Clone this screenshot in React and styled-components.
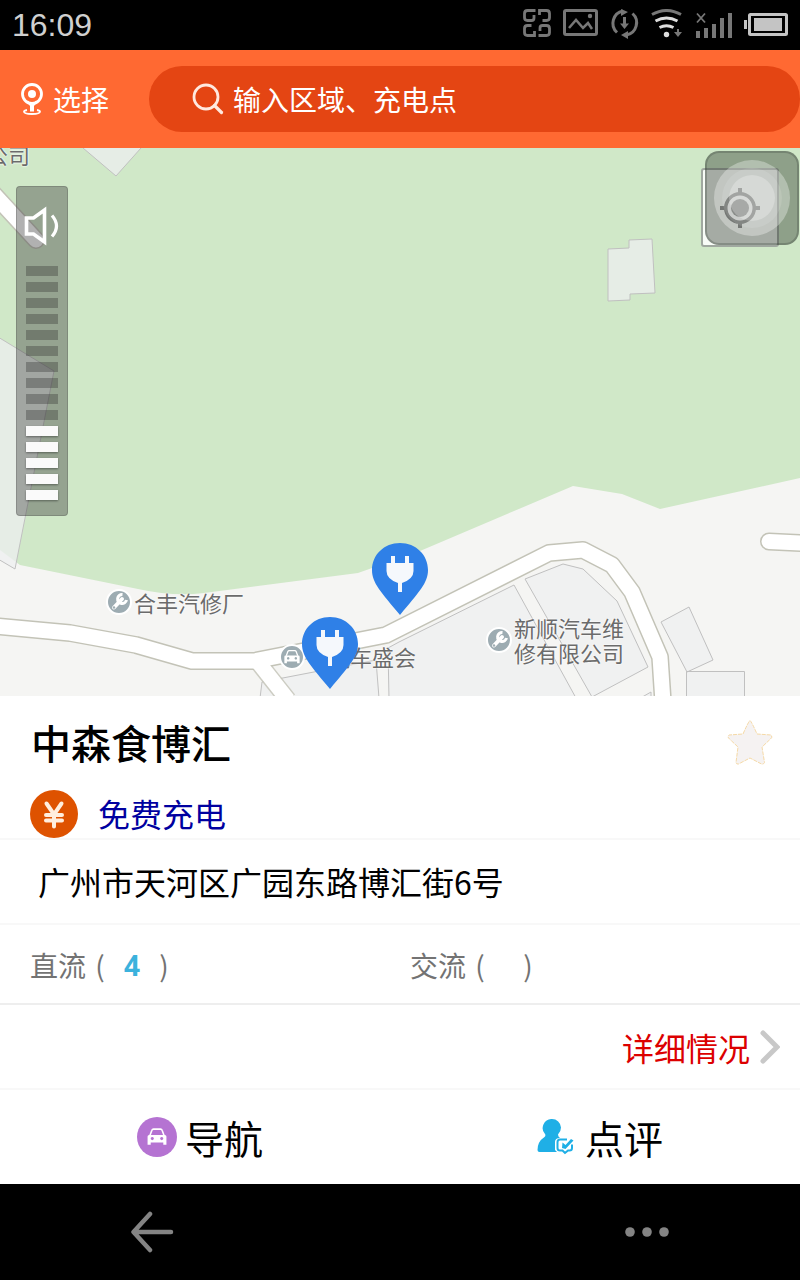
import React from "react";
import styled, { createGlobalStyle } from "styled-components";

const MAP_WIDTH = 800;
const MAP_HEIGHT = 548;

// Everything that sits on the map, in map units
const pins = [
  { id: "north", name: "充电点", x: 400, y: 467 },
  { id: "south", name: "中森食博汇", x: 330, y: 541 },
];

const places = [
  { id: "company", x: -14, y: 6, lines: ["公司"] },
  { id: "hefeng", x: 106, y: 454, icon: "wrench", lines: ["合丰汽修厂"] },
  { id: "carshow-icon", x: 279, y: 509, icon: "car", lines: [] },
  { id: "carshow", x: 328, y: 508, lines: ["汽车盛会"] },
  { id: "xinshun", x: 486, y: 492, icon: "wrench", lines: ["新顺汽车维", "修有限公司"] },
];

const VOLUME_STEPS = 15;
const volume = 5;

const place = (x, y) => ({
  left: `${(x / MAP_WIDTH) * 100}%`,
  top: `${(y / MAP_HEIGHT) * 100}%`,
});

const StatusIcons = () => (
  <svg width="268" height="32" viewBox="523 9 268 32" fill="none" aria-hidden="true">
    {/* four linked squares */}
    <g stroke="#777" strokeWidth="2.800">
      <path d="M535.500 10.500h-8q-3 0-3 3v4q0 3 3 3h4q2.500 0 2.500-2.500v-3" />
      <path d="M539.500 15v-4.500h7q3 0 3 3v4q0 3-3 3h-4" />
      <path d="M534.500 31v4.500h-7q-3 0-3-3v-4q0-3 3-3h4" />
      <path d="M538.500 35.500h8q3 0 3-3v-4q0-3-3-3h-4q-2.500 0-2.500 2.500v3" />
    </g>
    {/* picture */}
    <rect x="564.500" y="10.500" width="32" height="24" rx="1.500" stroke="#777" strokeWidth="3" />
    <path d="M569 28l7-8 7 8 5-5 4 6" stroke="#777" strokeWidth="2.500" />
    <circle cx="590" cy="16" r="2.200" fill="#777" />
    {/* sync */}
    <g stroke="#777" strokeWidth="3">
      <path d="M617 32.500a12.500 12.500 0 0 1 6-21.500M632.500 13.500a12.500 12.500 0 0 1-6 21.500" />
      <path d="M624.500 17v8" />
    </g>
    <path d="M621 9l7 3-7 4zM628 31l-7 4 7 4zM620 23.500h9l-4.500 5.500z" fill="#777" />
    {/* wifi */}
    <path d="M652 14.500q14.500-8 29 0" stroke="#777" strokeWidth="3" />
    <path d="M655.500 21q11-6 22 0M659.500 27.500q7-3.500 14 0" stroke="#ddd" strokeWidth="3" />
    <circle cx="666.500" cy="34.500" r="2.700" fill="#ddd" />
    <path d="M677 29h2v3h3l-4 5-4-5h3z" fill="#777" />
    {/* signal */}
    <path d="M697 13.500l8 9m0-9l-8 9" stroke="#777" strokeWidth="1.800" />
    <path d="M696 31h4v7h-4zM704 28h4v10h-4zM712 24h4v14h-4zM720 18h4v20h-4zM728 13h4v25h-4z" fill="#777" />
    {/* battery */}
    <rect x="749.500" y="14.500" width="37" height="20" rx="1" stroke="#c4c4c4" strokeWidth="3" />
    <path d="M754 18h28v13h-28zM744 20h3v9h-3z" fill="#c4c4c4" />
  </svg>
);

const LocationIcon = () => (
  <svg width="24" height="32" viewBox="0 0 24 32" fill="none" aria-hidden="true">
    <circle cx="12" cy="11" r="9.500" stroke="#fff" strokeWidth="2.800" />
    <circle cx="12" cy="11" r="4" fill="#fff" />
    <path d="M7.500 18.500l3.500 4v5h2v-5l3.500-4" stroke="#fff" strokeWidth="2" />
    <path d="M7 27q-3 .5-3 1.800 0 2.200 8 2.200t8-2.200q0-1.300-3-1.800" stroke="#fff" strokeWidth="1.800" />
  </svg>
);

const SearchIcon = () => (
  <svg width="32" height="32" viewBox="0 0 32 32" fill="none" stroke="#ffe9df" aria-hidden="true">
    <circle cx="14" cy="14" r="12" strokeWidth="2.800" />
    <path d="M22.500 22.500l7 7" strokeWidth="3.200" strokeLinecap="round" />
  </svg>
);

const SpeakerIcon = () => (
  <svg width="38" height="42" viewBox="0 0 38 42" fill="none" stroke="#fff" aria-hidden="true">
    <path d="M3.500 13h7L21.500 5v32L10.500 29h-7z" strokeWidth="3.600" />
    <path d="M29 10.500q9 10.500 0 21" strokeWidth="3.200" />
  </svg>
);

const CarShape = () => (
  <>
    <path
      d="M5 9L7.500 2.500Q8 1 9.500 1h9q1.500 0 2 1.500L23 9"
      fill="none"
      stroke="#fff"
      strokeWidth="2"
    />
    <path
      fillRule="evenodd"
      d="M4 8.500h20q2 0 2 2V21h-4v-3H6v3H2V10.500q0-2 2-2zM8 11a2 2 0 1 0 .01 0zM20 11a2 2 0 1 0 .01 0z"
      fill="#fff"
    />
  </>
);

const PoiIcon = ({ type }) => (
  <svg width="26" height="26" viewBox="0 0 26 26" aria-hidden="true">
    <circle cx="13" cy="13" r="12" fill="#9dacb2" stroke="#fff" strokeWidth="2" />
    {type === "wrench" ? (
      <>
        <path d="M8 18.500L16 10" stroke="#fff" strokeWidth="4" strokeLinecap="round" />
        <path
          d="M16.500 5.500a4.500 4.500 0 1 0 4 5.500"
          fill="none"
          stroke="#fff"
          strokeWidth="3"
        />
        <circle cx="8" cy="18.500" r="1.200" fill="#9dacb2" />
      </>
    ) : (
      <svg x="4" y="6" width="18" height="14" viewBox="0 0 28 22">
        <CarShape />
      </svg>
    )}
  </svg>
);

const PinIcon = () => (
  <svg width="56" height="72" viewBox="0 0 56 72" aria-hidden="true">
    <path d="M28 0C12 0 0 12 0 27c0 13 9 22 28 45 19-23 28-32 28-45C56 12 44 0 28 0z" fill="#2f80e7" />
    <path
      d="M19 13h4v7h10v-7h4v7h4.500v8q0 8-11.500 12v9h-4v-9q-11.500-4-11.500-12v-8H19z"
      fill="#f5f8fc"
    />
  </svg>
);

const TargetIcon = () => (
  <svg width="40" height="40" viewBox="0 0 40 40" fill="none" stroke="#333" aria-hidden="true">
    <path d="M20 0v6M20 34v6M0 20h6M34 20h6" strokeWidth="4" />
    <circle cx="20" cy="20" r="14" strokeWidth="4" />
    <circle cx="20" cy="20" r="11" stroke="#fff" strokeWidth="3" />
    <circle cx="20" cy="20" r="9" fill="#444" stroke="none" />
  </svg>
);

const MapDrawing = () => (
  <MapSvg viewBox="0 148 800 548" aria-hidden="true">
    <rect y="148" width="800" height="548" fill="#f5f5f3" />
    <path
      d="M0 148h800v330l-140 31-38-15-49-8-153 65-62 22-154 20q-30 4-66-4L20 565 0 550z"
      fill="#d0e8c8"
    />
    {/* building blocks */}
    <g fill="#eeeff0" fillOpacity="0.75" stroke="#c0c0c0">
      <path d="M83 148l33 28 25-28" />
      <path d="M-2 337l56 34-39 198-17-10z" />
      <path d="M608 249l21-1v-8l23-1 3 54-25 1v6l-22 1z" />
      <path d="M260 698l2-16 114-22 3 38M389 698l-1-50 11-6 115-57 62 113h-10M525 579l38-15 20 5 34 32 31 66-56 30z" />
      <path d="M661 622l28-15 24 53-26 12zM686.500 671.500h58v28h-58zM630 704l21-12v10" />
    </g>
    {/* roads: casing first, then the white surface */}
    <g fill="none" stroke="#c3c3b7" strokeWidth="18" strokeLinejoin="round">
      <path d="M258 662l30 38" strokeOpacity="0.8" />
      <path d="M-6 626l76 7 66 12 56 16h62l132-26 163-82 34-3 29 15 20 27 28 65 3 45" />
      <path d="M769 541.500l40 2" strokeLinecap="round" />
      <path d="M-10 190l46 50" strokeLinecap="round" />
    </g>
    <g fill="none" stroke="#fff" strokeWidth="15" strokeLinejoin="round">
      <path d="M258 662l30 38" />
      <path d="M-6 626l76 7 66 12 56 16h62l132-26 163-82 34-3 29 15 20 27 28 65 3 45" />
      <path d="M769 541.500l40 2" strokeLinecap="round" />
      <path d="M-10 190l46 50" strokeLinecap="round" />
    </g>
  </MapSvg>
);

const StarIcon = () => (
  <svg width="48" height="48" viewBox="0 0 48 48" aria-hidden="true">
    <path
      d="M24 1.500q1.500 1 7 13.500l14 1q2 2-.5 4L36 28l2.500 15.500q-1 2-3 1.500L24 39 12.500 45q-2 .5-2.500-1.500L12 28 3.500 20q-2.500-2-.5-4l14-1q5.500-12.500 7-13.500z"
      fill="#f5f2f2"
      stroke="#f5d9a6"
      strokeDasharray="4 1"
    />
  </svg>
);

const YuanIcon = () => (
  <svg width="48" height="48" viewBox="0 0 48 48" fill="none" aria-hidden="true">
    <circle cx="24" cy="24" r="24" fill="#de5200" />
    <path
      d="M16.500 13.500l7.500 11 7.500-11M24 24v12.500M16 25h16M16 30.500h16"
      stroke="#ffeede"
      strokeWidth="4"
      strokeLinecap="round"
    />
  </svg>
);

const ChevronIcon = () => (
  <svg width="20" height="34" viewBox="0 0 20 34" fill="none" aria-hidden="true">
    <path d="M3 3l14 14L3 31" stroke="#c8c8c8" strokeWidth="5" strokeLinecap="round" />
  </svg>
);

const NavigateIcon = () => (
  <svg width="40" height="40" viewBox="0 0 40 40" aria-hidden="true">
    <circle cx="20" cy="20" r="20" fill="#b573d2" />
    <svg x="9" y="11" width="22" height="18" viewBox="0 0 28 22">
      <CarShape />
    </svg>
  </svg>
);

const ReviewIcon = () => (
  <svg width="40" height="36" viewBox="0 0 40 36" fill="none" aria-hidden="true">
    <path
      d="M15 0a9 9 0 0 0-7 15Q9 16.500 7.500 18 .5 22.500.5 31q0 2 2 2H20l-2-2v-8q0-4 5-4-2-1.500-2-3.500 3-3 3-7A9 9 0 0 0 15 0z"
      fill="#1fafe6"
    />
    <path
      d="M30 20.500h-7q-2.500 0-2.500 2.500v6q0 2.500 2.500 2.500h2.500L28 34l3-2.500h1.500Q35 31.500 35 29v-3.500"
      stroke="#1fafe6"
      strokeWidth="2"
    />
    <path d="M25.500 23.500l3 2.500 5.500-6 2.500 1.500-8 8.500-3.500-1z" fill="#1fafe6" />
  </svg>
);

const App = () => {
  return (
    <Screen>
      <GlobalStyle />

      <StatusBar>
        <span>16:09</span>
        <StatusIcons />
      </StatusBar>

      <Header>
        <RegionButton type="button">
          <LocationIcon />
          选择
        </RegionButton>
        <SearchBox>
          <SearchIcon />
          <SearchInput type="text" aria-label="搜索" placeholder="输入区域、充电点" />
        </SearchBox>
      </Header>

      <MapArea>
        <MapDrawing />
        {places.map((item) => (
          <PlaceLabel key={item.id} style={place(item.x, item.y)}>
            {item.icon && <PoiIcon type={item.icon} />}
            <span>
              {item.lines.map((line) => (
                <PlaceLine key={line}>{line}</PlaceLine>
              ))}
            </span>
          </PlaceLabel>
        ))}
        {pins.map((pin) => (
          <Pin key={pin.id} type="button" aria-label={pin.name} style={place(pin.x, pin.y)}>
            <PinIcon />
          </Pin>
        ))}
        <LocateButton type="button" aria-label="定位">
          <TargetIcon />
        </LocateButton>
        <TouchBall>
          <BallRing>
            <BallCore />
          </BallRing>
        </TouchBall>
        <VolumePanel>
          <SpeakerIcon />
          <VolumeBars>
            {Array.from({ length: VOLUME_STEPS }, (_, i) => (
              <VolumeBar key={i} $on={i >= VOLUME_STEPS - volume} />
            ))}
          </VolumeBars>
        </VolumePanel>
      </MapArea>

      {/* STATION DETAILS */}
      <Summary>
        <TitleRow>
          <Title>中森食博汇</Title>
          <IconButton type="button" aria-label="收藏">
            <StarIcon />
          </IconButton>
        </TitleRow>
        <Fee>
          <YuanIcon />
          <FeeText>免费充电</FeeText>
        </Fee>
      </Summary>
      <Address>广州市天河区广园东路博汇街6号</Address>
      <Counts>
        <Count>
          直流<Paren>(</Paren>
          <Amount>4</Amount>
          <Paren>)</Paren>
        </Count>
        <Count>
          交流<Paren>(</Paren>
          <Amount />
          <Paren>)</Paren>
        </Count>
      </Counts>
      <DetailRow>
        <DetailLink href="#detail">
          详细情况
          <ChevronIcon />
        </DetailLink>
      </DetailRow>
      <Actions>
        <Action type="button">
          <NavigateIcon />
          导航
        </Action>
        <Action type="button">
          <ReviewIcon />
          点评
        </Action>
      </Actions>

      <SystemBar>
        <IconButton type="button" aria-label="返回">
          <svg width="44" height="44" viewBox="0 0 44 44" fill="none" aria-hidden="true">
            <path
              d="M19 4L2.500 22 19 40M4 22h36"
              stroke="#848484"
              strokeWidth="4.500"
              strokeLinecap="round"
              strokeLinejoin="round"
            />
          </svg>
        </IconButton>
        <IconButton type="button" aria-label="更多">
          <svg width="44" height="12" viewBox="0 0 44 12" fill="#848484" aria-hidden="true">
            <circle cx="5" cy="6" r="4.800" />
            <circle cx="22" cy="6" r="4.800" />
            <circle cx="39" cy="6" r="4.800" />
          </svg>
        </IconButton>
      </SystemBar>
    </Screen>
  );
};

// STYLED COMPONENTS
const GlobalStyle = createGlobalStyle`
  * {
    box-sizing: border-box;
  }
  body {
    margin: 0;
    background: #000;
    font-family: "Noto Sans CJK SC", sans-serif;
  }
  button, input {
    margin: 0;
    padding: 0;
    border: none;
    background: none;
    font: inherit;
    color: inherit;
  }
  svg {
    display: block;
    flex-shrink: 0;
  }
`;

const Screen = styled.div`
  display: flex;
  flex-direction: column;
  min-height: 100vh;
  background: #fff;
`;

const StatusBar = styled.div`
  display: flex;
  align-items: center;
  justify-content: space-between;
  height: 50px;
  padding: 0 9px 0 12px;
  background: #000;
  color: #d0d0d0;
  font-family: "Liberation Sans", sans-serif;
  font-size: 32px;
`;

const Header = styled.header`
  display: flex;
  align-items: center;
  gap: 40px;
  height: 98px;
  padding-left: 20px;
  background: #ff6932;
  color: #fff;
  font-size: 28px;
`;

const RegionButton = styled.button`
  display: flex;
  align-items: center;
  gap: 9px;
`;

const SearchBox = styled.label`
  flex: 1;
  display: flex;
  align-items: center;
  gap: 9px;
  height: 66px;
  padding: 0 43px;
  border-radius: 33px;
  background: #e44513;
`;

const SearchInput = styled.input`
  flex: 1;
  min-width: 0;
  outline: none;
  &::placeholder {
    color: #fff;
    opacity: 1;
  }
`;

const MapArea = styled.main`
  position: relative;
  overflow: hidden;
  aspect-ratio: 800 / 548;
`;

const MapSvg = styled.svg`
  width: 100%;
  height: 100%;
`;

const PlaceLabel = styled.div`
  position: absolute;
  display: flex;
  align-items: center;
  gap: 2px;
  transform: translateY(-50%);
  color: #6b6b6b;
  font-size: 22px;
  line-height: 25px;
  white-space: nowrap;
  text-shadow: 0 0 2px #fff, 0 0 2px #fff;
`;

const PlaceLine = styled.span`
  display: block;
`;

const Pin = styled.button`
  position: absolute;
  transform: translate(-50%, -100%);
`;

const LocateButton = styled.button`
  position: absolute;
  top: 20px;
  right: 21px;
  display: flex;
  align-items: center;
  justify-content: center;
  width: 78px;
  height: 79px;
  border: 2px solid #a0a8a0;
  border-radius: 3px;
  background: rgba(255, 255, 255, 0.85);
`;

const TouchBall = styled.div`
  position: absolute;
  top: 3px;
  right: 1px;
  display: flex;
  align-items: center;
  justify-content: center;
  width: 94px;
  height: 94px;
  border: 2px solid rgba(60, 70, 60, 0.3);
  border-radius: 14px;
  background: rgba(50, 60, 50, 0.42);
`;

const BallRing = styled.div`
  display: flex;
  align-items: center;
  justify-content: center;
  width: 76px;
  height: 76px;
  border: 8px solid rgba(255, 255, 255, 0.1);
  border-radius: 50%;
  background: rgba(255, 255, 255, 0.25);
`;

const BallCore = styled.div`
  width: 46px;
  height: 46px;
  border-radius: 50%;
  background: rgba(255, 255, 255, 0.4);
  box-shadow: 0 0 0 7px rgba(255, 255, 255, 0.2);
`;

const VolumePanel = styled.div`
  position: absolute;
  top: 38px;
  left: 16px;
  display: flex;
  flex-direction: column;
  align-items: center;
  gap: 19px;
  width: 52px;
  padding: 18px 0 15px;
  border: 1px solid rgba(60, 60, 60, 0.25);
  border-radius: 4px;
  background: rgba(60, 60, 60, 0.4);
`;

const VolumeBars = styled.div`
  display: flex;
  flex-direction: column;
  gap: 6px;
`;

const VolumeBar = styled.span`
  width: 32px;
  height: 10px;
  background: ${({ $on }) => ($on ? "#fafafa" : "rgba(50, 50, 50, 0.35)")};
  box-shadow: ${({ $on }) => ($on ? "0 1px 2px rgba(0, 0, 0, 0.4)" : "none")};
`;

const Summary = styled.section`
  height: 144px;
  padding: 19px 26px 0 30px;
  border-bottom: 2px solid #f8f8f8;
`;

const TitleRow = styled.div`
  display: flex;
  align-items: center;
  justify-content: space-between;
  height: 56px;
`;

const Title = styled.h1`
  margin: 0;
  padding: 0 0 2px 1px;
  color: #000;
  font-size: 40px;
  font-weight: 500;
  line-height: 54px;
`;

const IconButton = styled.button`
  display: flex;
  align-items: center;
  justify-content: center;
`;

const Fee = styled.div`
  display: flex;
  gap: 20px;
  margin-top: 19px;
`;

const FeeText = styled.span`
  color: #0000a0;
  font-size: 32px;
  line-height: 46px;
`;

const Address = styled.p`
  height: 85px;
  margin: 0;
  padding-left: 38px;
  border-bottom: 2px solid #f8f8f8;
  color: #000;
  font-size: 32px;
  line-height: 82px;
`;

const Counts = styled.div`
  display: grid;
  grid-template-columns: 380px 1fr;
  height: 80px;
  padding-left: 30px;
  border-bottom: 2px solid #eee;
  color: #737373;
  font-size: 28px;
  line-height: 80px;
`;

const Count = styled.span`
  display: flex;
`;

const Paren = styled.span`
  width: 28px;
  text-align: center;
`;

const Amount = styled.b`
  padding: 0 10px;
  color: #3bb2dd;
  font-family: "Noto Sans", sans-serif;
`;

const DetailRow = styled.div`
  display: flex;
  align-items: center;
  justify-content: flex-end;
  height: 85px;
  padding-right: 20px;
  border-bottom: 2px solid #f8f8f8;
`;

const DetailLink = styled.a`
  display: flex;
  align-items: center;
  gap: 10px;
  color: #dc0000;
  font-size: 32px;
  line-height: 46px;
  text-decoration: none;
`;

const Actions = styled.div`
  display: grid;
  grid-template-columns: 1fr 1fr;
  height: 94px;
`;

const Action = styled.button`
  display: flex;
  align-items: center;
  justify-content: center;
  gap: 8px;
  color: #000;
  font-size: 39px;
`;

const SystemBar = styled.nav`
  display: flex;
  align-items: center;
  justify-content: space-between;
  height: 96px;
  margin-top: auto;
  padding: 0 131px;
  background: #000;
`;

export default App;
